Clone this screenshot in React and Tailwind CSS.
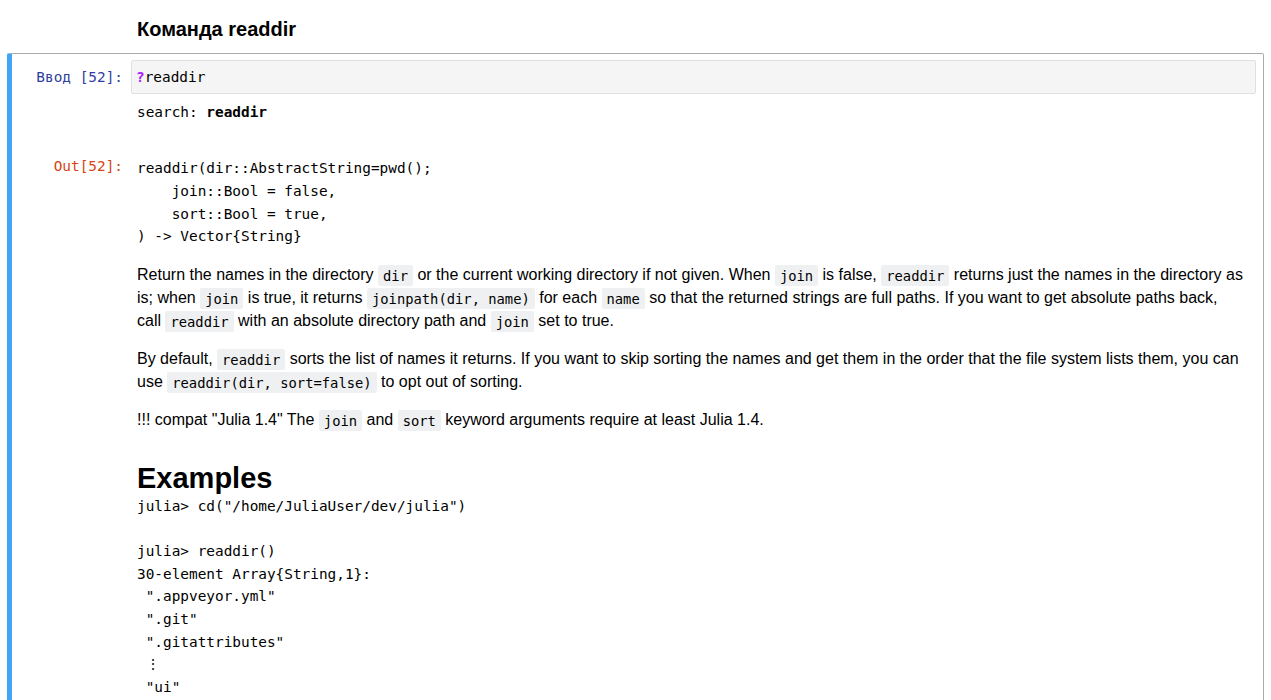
const MONO = "font-['DejaVu_Sans_Mono','Liberation_Mono',monospace]";

function C({ children }) {
  return (
    <code
      className={`${MONO} text-[13.8px] leading-[0] bg-[#eff0f1] px-[5px] py-[2.5px] rounded-[2px] text-black`}
    >
      {children}
    </code>
  );
}

const signature = [
  "readdir(dir::AbstractString=pwd();",
  "    join::Bool = false,",
  "    sort::Bool = true,",
  ") -> Vector{String}",
];

const examples = [
  'julia> cd("/home/JuliaUser/dev/julia")',
  "",
  "julia> readdir()",
  "30-element Array{String,1}:",
  ' ".appveyor.yml"',
  ' ".git"',
  ' ".gitattributes"',
  " ⋮",
  ' "ui"',
  ' "usr"',
  "",
  "julia> readdir(join=true)",
];

function Prompt({ children, color, className = "" }) {
  return (
    <div
      className={`w-[119px] shrink-0 pr-[8px] text-right ${MONO} text-[14.4px] ${color} ${className}`}
    >
      {children}
    </div>
  );
}

export default function App() {
  return (
    <div className="min-h-screen bg-white text-black font-['Liberation_Sans',Arial,sans-serif]">
      <div className="h-[53px] pl-[137px] pt-[19px]">
        <h2 className="text-[20px] leading-[20px] font-bold">Команда readdir</h2>
      </div>

      <div className="mx-[7px] border border-[#ababab] border-l-[5px] border-l-[#42a5f5] rounded-[2px] pt-[6px] pr-[7px] pb-[20px]">
        {/* input */}
        <div className="flex">
          <Prompt color="text-[#303f9f]" className="leading-[34px]">
            Ввод [52]:
          </Prompt>
          <div
            className={`flex-1 h-[34px] flex items-center pt-[1px] px-[4px] bg-[#f5f5f5] border border-[#e0e0e0] rounded-[2px] ${MONO} text-[14.4px]`}
          >
            <span className="text-[#aa22ff] font-bold">?</span>readdir
          </div>
        </div>

        {/* stream output */}
        <div className="flex mt-[6.5px]">
          <div className="w-[119px] shrink-0" />
          <div className={`pl-[6px] ${MONO} text-[14.4px] leading-[22.7px]`}>
            search: <b>readdir</b>
          </div>
        </div>

        {/* Out[52] */}
        <div className="flex mt-[32px]">
          <Prompt color="text-[#d84315]" className="leading-[22.7px]">
            Out[52]:
          </Prompt>
          <div className="flex-1 min-w-0 pl-[6px] pr-[11px] pt-[2px]">
            <pre className={`${MONO} text-[14.4px] leading-[22.7px]`}>
              {signature.join("\n")}
            </pre>

            <p className="mt-[15px] text-[16px] leading-[23px]">
              Return the names in the directory <C>dir</C> or the current working directory if not
              given. When <C>join</C> is false, <C>readdir</C> returns just the names in the
              directory as is; when <C>join</C> is true, it returns <C>joinpath(dir, name)</C> for
              each <C>name</C> so that the returned strings are full paths. If you want to get
              absolute paths back, call <C>readdir</C> with an absolute directory path and{" "}
              <C>join</C> set to true.
            </p>

            <p className="mt-[15px] text-[16px] leading-[23px]">
              By default, <C>readdir</C> sorts the list of names it returns. If you want to skip
              sorting the names and get them in the order that the file system lists them, you can
              use <C>readdir(dir, sort=false)</C> to opt out of sorting.
            </p>

            <p className="mt-[15px] text-[16px] leading-[23px]">
              !!! compat "Julia 1.4" The <C>join</C> and <C>sort</C> keyword arguments require at
              least Julia 1.4.
            </p>

            <h1 className="mt-[31px] text-[29px] leading-[32px] font-bold">Examples</h1>

            <pre className={`mt-[0.5px] ${MONO} text-[14.4px] leading-[22.7px]`}>
              {examples.join("\n")}
            </pre>
          </div>
        </div>
      </div>
    </div>
  );
}
